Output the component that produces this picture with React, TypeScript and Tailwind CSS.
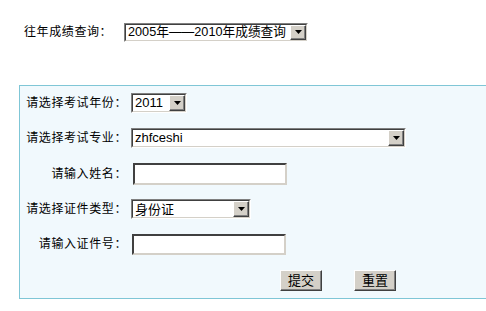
import React from "react";

const font = { fontFamily: '"Liberation Sans", "Noto Sans CJK SC", sans-serif' };

function Arrow() {
  return (
    <div className="flex h-full w-[16px] shrink-0 items-center justify-center border border-t-white border-l-white border-r-[#404040] border-b-[#404040] bg-[#d4d0c8] shadow-[inset_-1px_-1px_0_#808080]">
      <svg width="7" height="4" viewBox="0 0 7 4">
        <polygon points="0,0 7,0 3.5,4" fill="#000" />
      </svg>
    </div>
  );
}

function Select({ w, h, text, size }: { w: string; h: string; text: string; size?: string }) {
  return (
    <div
      className={`flex ${w} ${h} items-stretch border border-t-[#808080] border-l-[#808080] border-r-white border-b-white bg-white`}
    >
      <div className="flex flex-1 items-stretch border border-t-[#404040] border-l-[#404040] border-r-[#d4d0c8] border-b-[#d4d0c8]">
        <div
          className={`flex flex-1 items-center overflow-hidden whitespace-nowrap pl-[2px] ${size ?? "text-[13px]"} leading-none text-black`}
        >
          {text}
        </div>
        <Arrow />
      </div>
    </div>
  );
}

function Input({ w, h }: { w: string; h: string }) {
  return (
    <div
      className={`${w} ${h} border-2 border-t-[#404040] border-l-[#404040] border-r-[#d4d0c8] border-b-[#d4d0c8] bg-white`}
    />
  );
}

function Label({ children }: { children: React.ReactNode }) {
  return (
    <div className="w-[107px] shrink-0 whitespace-nowrap text-right text-[12px] tracking-[0.6px] text-black">
      {children}
    </div>
  );
}

function Btn({ children }: { children: React.ReactNode }) {
  return (
    <div className="flex h-[21px] w-[42px] items-center justify-center border border-t-white border-l-white border-r-[#404040] border-b-[#404040] bg-[#d4d0c8] text-[13px] leading-none text-black shadow-[inset_-1px_-1px_0_#808080]">
      {children}
    </div>
  );
}

export default function App() {
  return (
    <div className="h-[311px] w-[486px] overflow-hidden bg-white" style={font}>
      <div className="flex h-[63px] items-center pt-[1px]">
        <div className="w-[124px] shrink-0 whitespace-nowrap pl-[24px] text-[12px] tracking-[0.6px] text-black">
          往年成绩查询：
        </div>
        <Select w="w-[184px]" h="h-[19px]" text="2005年——2010年成绩查询" size="text-[12.7px]" />
      </div>
      <div className="mt-[22px] ml-[19px] flex h-[214px] flex-col border border-r-0 border-[#7fc6d6] bg-[#f1f9fd]">
        <div className="flex h-[33px] items-center">
          <Label>请选择考试年份：</Label>
          <div className="ml-[4px]">
            <Select w="w-[56px]" h="h-[20px]" text="2011" />
          </div>
        </div>
        <div className="flex h-[37px] items-center">
          <Label>请选择考试专业：</Label>
          <div className="ml-[4px]">
            <Select w="w-[275px]" h="h-[20px]" text="zhfceshi" />
          </div>
        </div>
        <div className="flex h-[36px] items-center">
          <Label>请输入姓名：</Label>
          <div className="ml-[6px]">
            <Input w="w-[154px]" h="h-[22px]" />
          </div>
        </div>
        <div className="flex h-[34px] items-center">
          <Label>请选择证件类型：</Label>
          <div className="ml-[4px]">
            <Select w="w-[120px]" h="h-[20px]" text="身份证" />
          </div>
        </div>
        <div className="flex h-[36px] items-center">
          <Label>请输入证件号：</Label>
          <div className="ml-[5px]">
            <Input w="w-[154px]" h="h-[21px]" />
          </div>
        </div>
        <div className="flex h-[36px] items-center pl-[260px]">
          <Btn>提交</Btn>
          <div className="ml-[32px]">
            <Btn>重置</Btn>
          </div>
        </div>
      </div>
    </div>
  );
}
